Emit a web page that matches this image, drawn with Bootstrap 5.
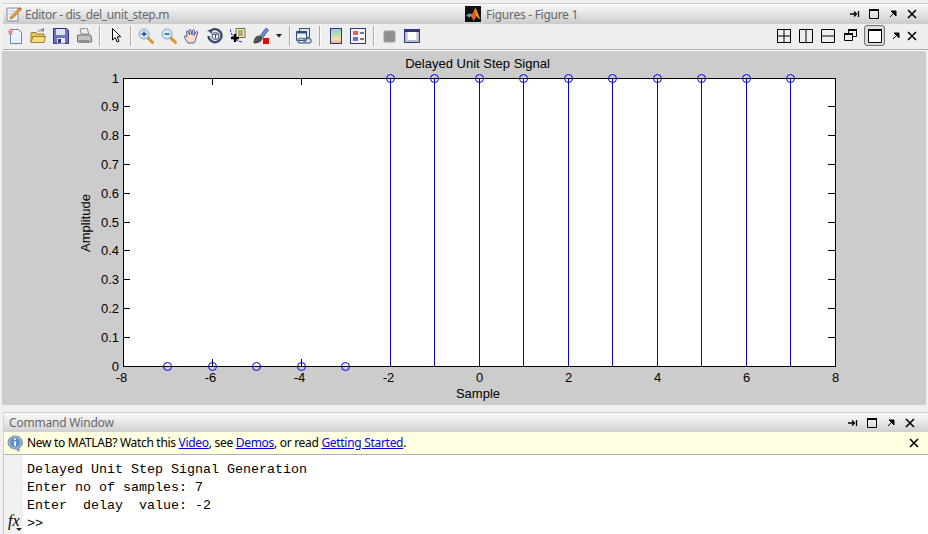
<!DOCTYPE html>
<html lang="en">

<head>
    <meta charset="UTF-8" />
    <meta name="viewport" content="width=device-width, initial-scale=1.0" />
    <title>MATLAB Figures - Figure 1</title>
    <link rel="stylesheet" href="https://cdn.jsdelivr.net/npm/bootstrap@5.3.3/dist/css/bootstrap.min.css" />
    <style>
        html, body { height: 534px; overflow: hidden; }
        body { background: #f0f0f0; font-family: "Noto Sans", "Liberation Sans", sans-serif; font-size: 12px; color: #000; }
        svg { display: block; flex: none; }
        .shell { width: 928px; height: 534px; padding-top: 3px; }
        .pane-head { height: 21px; margin-left: 3px; background: linear-gradient(#fbfbfb, #e6e6e6 45%, #cbcbcb); border-top: 1px solid #cfcfcf; color: #686868; line-height: 19px; }
        .pane-tab { width: 461px; padding-left: 2px; gap: 2px; letter-spacing: -.36px; }
        .pane-tab-fig { padding-left: 1px; gap: 5px; letter-spacing: -.28px; }
        .win-btns { gap: 10px; padding-right: 11px; }
        .win-dock { margin-right: -2px; }
        .cmd-head .win-btns { padding-right: 13px; }
        .tools { height: 26px; margin-left: 3px; padding: 0 0 2px 4px; background: #eeeeee; border-bottom: 1px solid #a9a9a9; box-shadow: 0 1px 0 #fff; gap: 7px; }
        .tool-sep { width: 1px; height: 20px; background: #a8a8a8; box-shadow: 1px 0 0 #fff; }
        .tool-arrow { width: 6px; }
        .nudge { margin-left: -1px; }
        .layout-btns { gap: 9px; padding-right: 11px; }
        .layout-tight { margin-right: -1px; }
        .layout-on { width: 21px; height: 21px; margin: 0 -2px; border: 1px solid #777; border-radius: 3px; background: #e2e2e2; box-shadow: inset 0 0 2px #aaa; }
        .layout-close { margin-left: -2px; }
        .figure-pane { margin: 1px 2px 0 2px; height: 354px; background: #cccccc; }
        .figure-pane text { font-family: "Liberation Sans", Arial, sans-serif; font-size: 13px; fill: #000; }
        .cmd-pane { margin-top: 7px; margin-left: 3px; }
        .cmd-head { height: 20px; background: linear-gradient(#fbfbfb, #e8e8e8 45%, #d0d0d0); border-top: 1px solid #cfcfcf; border-left: 1px solid #d0d0d0; color: #686868; padding-left: 5px; line-height: 19px; letter-spacing: -.2px; }
        .cmd-hint { height: 23px; background: #ffffe1; border-bottom: 1px solid #b0b0b0; border-left: 1px solid #d0d0d0; padding-left: 3px; gap: 4px; line-height: 22px; letter-spacing: -.3px; }
        .cmd-hint a { color: #0000ee; }
        .cmd-hint-close { margin-left: auto; margin-right: 9px; }
        .cmd-body { height: 79px; background: #fff; }
        .cmd-gutter { width: 20px; background: #f0f0f0; border-left: 1px solid #c8c8c8; font-family: "Liberation Serif", serif; font-style: italic; font-size: 16px; line-height: 14px; padding: 0 0 3px 4px; }
        .cmd-text { margin: 0; padding: 6px 0 0 4px; font-family: "Liberation Mono", "Courier New", monospace; font-size: 13.33px; line-height: 18px; color: #000; }
    </style>
</head>

<body>
    <div class="shell d-flex flex-column">
        <div class="pane-head d-flex">
            <div class="pane-tab d-flex align-items-center">
                <svg width="18" height="18" viewBox="0 0 18 18">
                    <path d="M2 3h11v13H2z" fill="#eef2f6" stroke="#7f8fa3" />
                    <path d="M4 6h6M4 9h5M4 12h4" stroke="#b8c4d2" />
                    <path d="M6 12l8-9 2 2-8 8-3 1z" fill="#e9a23a" stroke="#a8641a" stroke-width=".7" />
                    <path d="M14 3l1-1 2 2-1 1z" fill="#d84a3a" />
                </svg>
                <span>Editor - dis_del_unit_step.m</span>
            </div>
            <div class="pane-tab-fig d-flex align-items-center flex-grow-1">
                <svg width="16" height="16" viewBox="0 0 16 16">
                    <rect width="16" height="16" fill="#111" />
                    <path d="M1 9.500l4-2 2 1L10 2c2 1 3 8 5.500 11-2-.5-3-2-4-3-1 2-2 3.500-3 5-1-2-1.500-4-3-5z" fill="#d9601a" />
                    <path d="M10 2c2 1 3 8 5.500 11-2-.5-3-2-4-3-.5-3-1-5-1.500-8z" fill="#f5a623" />
                    <path d="M1 9.500l4-2 2 1-2.500 3z" fill="#4fa3c7" />
                </svg>
                <span>Figures - Figure 1</span>
                <div class="win-btns d-flex align-items-center ms-auto">
                    <svg class="win-dock" width="12" height="12" viewBox="0 0 12 12"><path d="M1 6h6M5 3.500L7.500 6 5 8.500M9.500 3v6" stroke="#000" fill="none" stroke-width="1.300" /></svg>
                    <svg width="10" height="10" viewBox="0 0 10 10"><path d="M.5 .5h9v9h-9z" fill="none" stroke="#000" /><path d="M0 1h10" stroke="#000" stroke-width="2" /></svg>
                    <svg width="8" height="8" viewBox="0 0 8 8"><path d="M1 7l4-4M2 1h5v5z" stroke="#000" fill="#000" /></svg>
                    <svg width="10" height="10" viewBox="0 0 10 10"><path d="M1 1l8 8M9 1L1 9" stroke="#000" stroke-width="1.600" /></svg>
                </div>
            </div>
        </div>

        <div class="tools d-flex align-items-center">
            <!-- new -->
            <svg width="16" height="16" viewBox="0 0 16 16"><path d="M3.500 1.500h8l3 3v11h-11z" fill="#eaf4fd" stroke="#5f87ad" /><path d="M3 0l1.500 3L7 2 5 4.500 6 7 3.500 5.500 1 7l1-2.500L0 2l2.500 1z" fill="#e8866a" /></svg>
            <!-- open -->
            <svg width="16" height="16" viewBox="0 0 16 16"><path d="M1 5V14.500H14V6H7L6 4.500H2z" fill="#e8c45a" stroke="#a0822a" /><path d="M1 14.500L3 8.500H15.500L14 14.500z" fill="#f7dc7e" stroke="#a0822a" /><path d="M8 4c1-2 3-3 5-2.500M13.500 0v3h-3" stroke="#5f7f9f" fill="none" /></svg>
            <!-- save -->
            <svg width="16" height="16" viewBox="0 0 16 16"><path d="M.5 .5h13l2 2v13H.5z" fill="#6b74c4" stroke="#2c3580" /><path d="M3 1h9v6H3z" fill="#dfe3f5" /><path d="M4 10h8v5.500H4z" fill="#e8e8e8" /><path d="M5 11h3v4H5z" fill="#2c3580" /></svg>
            <!-- print -->
            <svg width="16" height="16" viewBox="0 0 16 16"><path d="M4 1l7-1 2 6H5z" fill="#eee" stroke="#8a8a8a" /><path d="M1.500 7h13l1 3v4h-14z" fill="#c2c2c2" stroke="#6e6e6e" /><path d="M3 12h10v3H3z" fill="#8c8c8c" /></svg>
            <div class="tool-sep"></div>
            <!-- pointer -->
            <svg width="16" height="16" viewBox="0 0 16 16"><path d="M5.500 .5v11.500l2.800-2.500 1.700 4.500 2-.8-1.800-4.400h3.500z" fill="#fff" stroke="#000" /></svg>
            <div class="tool-sep"></div>
            <!-- zoom in -->
            <svg width="16" height="16" viewBox="0 0 16 16"><path d="M9.500 9.500l5 5" stroke="#d9952e" stroke-width="3" stroke-linecap="round" /><circle cx="6" cy="6" r="5" fill="#d5e9f7" stroke="#7fa4c4" /><path d="M3.500 6h5M6 3.500v5" stroke="#1c3f94" stroke-width="1.300" /></svg>
            <!-- zoom out -->
            <svg width="16" height="16" viewBox="0 0 16 16"><path d="M9.500 9.500l5 5" stroke="#d9952e" stroke-width="3" stroke-linecap="round" /><circle cx="6" cy="6" r="5" fill="#d5e9f7" stroke="#7fa4c4" /><path d="M3.500 6h5" stroke="#1c3f94" stroke-width="1.300" /></svg>
            <!-- pan -->
            <svg width="16" height="16" viewBox="0 0 16 16"><path d="M4 15c-1-2-3-4-3.500-6s1.500-1 2.500 0L2.500 4c0-1.500 1.500-1.500 2 0L5.500 7 5 2.500c0-1.500 2-1.500 2 0L8 7l.5-4.500c.5-1.500 2-1 2 .5L10 7.500 12 4c1-1 2-.5 1.500 1L12 10c-.5 2-1 4-2 5z" fill="#fbdcc4" stroke="#3c4fa0" stroke-width=".9" /></svg>
            <!-- rotate -->
            <svg width="16" height="16" viewBox="0 0 16 16"><path d="M3 3.500A6.500 6.500 0 1 1 1.500 8" fill="none" stroke="#3e4a70" stroke-width="2.400" /><path d="M0 2h5v4z" fill="#3e4a70" /><circle cx="8.500" cy="8" r="3.500" fill="#e8eef5" stroke="#3e4a70" /><path d="M6.500 6.500h4M8.500 6.500v4" stroke="#3e4a70" /></svg>
            <!-- data cursor -->
            <svg width="16" height="16" viewBox="0 0 16 16"><path d="M0 1c1 6 5 12 12 13" fill="none" stroke="#2222e0" stroke-dasharray="3 1" /><path d="M6 .5h9v9H6z" fill="#f5eeae" stroke="#6b6b40" /><path d="M8 3h5M8 5h5M8 7h5" stroke="#6b6b40" /><path d="M1 10h8M5 6v8" stroke="#000" stroke-width="2.400" /></svg>
            <!-- brush -->
            <svg width="16" height="16" viewBox="0 0 16 16"><path d="M7 8l6-8 2.500 2-6 8z" fill="#6a8fd0" stroke="#2c3580" stroke-width=".7" /><path d="M1 15c0-4 2-7 5-7l3 2c0 3-3 5-8 5z" fill="#555" stroke="#222" stroke-width=".7" /><rect x="10" y="10" width="6" height="6" fill="#f00000" /></svg>
            <svg width="6" height="4" viewBox="0 0 6 4" class="tool-arrow"><path d="M0 0h6L3 3.500z" fill="#222" /></svg>
            <div class="tool-sep"></div>
            <!-- link plot -->
            <svg width="16" height="16" viewBox="0 0 16 16" class="nudge"><path d="M3.500 .5h10v9h-10z" fill="#dfe8f2" stroke="#2f4f86" /><path d="M.5 3.500h10v9H.5z" fill="#eef3f8" stroke="#2f4f86" /><path d="M.5 3.500h10v2H.5z" fill="#2f4f86" /><rect x="2" y="10.500" width="7" height="4.500" rx="2.200" fill="none" stroke="#66788f" stroke-width="1.500" /><rect x="8" y="10.500" width="7" height="4.500" rx="2.200" fill="none" stroke="#66788f" stroke-width="1.500" /></svg>
            <div class="tool-sep"></div>
            <!-- colorbar -->
            <svg width="16" height="16" viewBox="0 0 16 16"><defs><linearGradient id="cbar" x1="0" y1="0" x2="0" y2="1"><stop offset="0" stop-color="#9cc4ea" /><stop offset=".4" stop-color="#b6e0b0" /><stop offset=".7" stop-color="#f2e2a6" /><stop offset="1" stop-color="#f0a8a8" /></linearGradient></defs><rect x="3.500" y=".5" width="11" height="15" fill="url(#cbar)" stroke="#2c3a78" /></svg>
            <!-- legend -->
            <svg width="16" height="16" viewBox="0 0 16 16"><rect x=".5" y=".5" width="15" height="15" fill="#f6f6f6" stroke="#2c3a78" /><rect x="3" y="3" width="5" height="4" fill="#e2606a" /><rect x="3" y="9" width="5" height="4" fill="#6a6ae2" /><path d="M10 5h4M10 11h4" stroke="#000" /></svg>
            <div class="tool-sep"></div>
            <!-- hide plot tools -->
            <svg width="16" height="16" viewBox="0 0 16 16"><rect x="3" y="3" width="11" height="11" rx="1" fill="#8f8f8f" stroke="#a2a2a2" /></svg>
            <!-- show plot tools -->
            <svg width="16" height="16" viewBox="0 0 16 16"><rect x=".5" y="1.500" width="15" height="13" fill="#fff" stroke="#2c3a78" /><path d="M1 2h14v2H1z" fill="#2c3a78" /><path d="M1 4h2.500v10H1zM12.500 4H15v10h-2.500zM3.500 12h9v2h-9z" fill="#b5bdcc" /></svg>

            <div class="layout-btns d-flex align-items-center ms-auto">
                <svg class="layout-tight" width="14" height="14" viewBox="0 0 14 14"><path d="M.5 .5h13v13H.5zM.5 7h13M7 .5v13" fill="none" stroke="#000" /></svg>
                <svg class="layout-tight" width="14" height="14" viewBox="0 0 14 14"><path d="M.5 .5h13v13H.5zM7 .5v13" fill="none" stroke="#000" /></svg>
                <svg width="14" height="14" viewBox="0 0 14 14"><path d="M.5 .5h13v13H.5zM.5 7h13" fill="none" stroke="#000" /></svg>
                <svg width="13" height="13" viewBox="0 0 13 13"><path d="M4.500 .5h8v7h-8z" fill="none" stroke="#000" /><path d="M4 1h9" stroke="#000" stroke-width="2" /><path d="M.5 4.500h8v7h-8z" fill="#eee" stroke="#000" /><path d="M0 5h9" stroke="#000" stroke-width="2" /></svg>
                <div class="layout-on d-flex align-items-center justify-content-center">
                    <svg width="14" height="14" viewBox="0 0 14 14"><path d="M.5 .5h13v13H.5z" fill="#fff" stroke="#000" /><path d="M0 1h14" stroke="#000" stroke-width="2" /></svg>
                </div>
                <svg width="8" height="8" viewBox="0 0 8 8"><path d="M1 7l4-4M2 1h5v5z" stroke="#000" fill="#000" /></svg>
                <svg class="layout-close" width="10" height="10" viewBox="0 0 10 10"><path d="M1 1l8 8M9 1L1 9" stroke="#000" stroke-width="1.600" /></svg>
            </div>
        </div>

        <div class="figure-pane">
            <svg id="plot" width="924" height="354" viewBox="2 51 924 354" shape-rendering="crispEdges"></svg>
        </div>

        <div class="cmd-pane">
            <div class="cmd-head d-flex align-items-center">
                <span>Command Window</span>
                <div class="win-btns d-flex align-items-center ms-auto">
                    <svg class="win-dock" width="12" height="12" viewBox="0 0 12 12"><path d="M1 6h6M5 3.500L7.500 6 5 8.500M9.500 3v6" stroke="#000" fill="none" stroke-width="1.300" /></svg>
                    <svg width="10" height="10" viewBox="0 0 10 10"><path d="M.5 .5h9v9h-9z" fill="none" stroke="#000" /><path d="M0 1h10" stroke="#000" stroke-width="2" /></svg>
                    <svg width="8" height="8" viewBox="0 0 8 8"><path d="M1 7l4-4M2 1h5v5z" stroke="#000" fill="#000" /></svg>
                    <svg width="10" height="10" viewBox="0 0 10 10"><path d="M1 1l8 8M9 1L1 9" stroke="#000" stroke-width="1.600" /></svg>
                </div>
            </div>
            <div class="cmd-hint d-flex align-items-center">
                <svg width="16" height="17" viewBox="0 0 16 17"><path d="M8 1a7 6.500 0 1 0 0 13h1l3 2.500V13a7 6.500 0 0 0-4-12z" fill="#8fb3d6" stroke="#7d8ea3" /><circle cx="8" cy="7.500" r="4.800" fill="#5f8fc4" /><path d="M8 3.500v1.500M8 6.500v4.500" stroke="#fff" stroke-width="2" /></svg>
                <span>New to MATLAB? Watch this <a href="#">Video</a>, see <a href="#">Demos</a>, or read <a href="#">Getting Started</a>.</span>
                <svg class="cmd-hint-close" width="10" height="10" viewBox="0 0 10 10"><path d="M1 1l8 8M9 1L1 9" stroke="#000" stroke-width="1.600" /></svg>
            </div>
            <div class="cmd-body d-flex">
                <div class="cmd-gutter d-flex flex-column justify-content-end">
                    <span>fx</span>
                    <svg class="ms-2" width="6" height="3" viewBox="0 0 6 3"><path d="M0 0h6L3 3z" fill="#222" /></svg>
                </div>
                <pre class="cmd-text">Delayed Unit Step Signal Generation
Enter no of samples: 7
Enter  delay  value: -2
&gt;&gt;</pre>
            </div>
        </div>
    </div>

    <script>
        const plot = document.getElementById('plot');
        const left = 123, right = 835, top_ = 78, bottom = 366;
        const xAt = v => Math.floor(left + (v + 8) * 44.5) + 0.5;
        const yAt = v => Math.floor(bottom - v * 288) + 0.5;
        let out = `<rect x="${left}" y="${top_}" width="${right - left}" height="${bottom - top_}" fill="#fff"/>`;

        // stems first, the axes sit on top
        for (let n = -7; n <= 7; n++) {
            const v = n >= -2 ? 1 : 0;
            if (v) out += `<path d="M${xAt(n)} ${bottom}V${top_}" stroke="#00f"/>`;
        }

        let axes = `<path d="M${left + .5} ${top_ + .5}H${right + .5}V${bottom + .5}H${left + .5}Z" fill="none" stroke="#000"/>`;
        for (let x = -8; x <= 8; x += 2) {
            // stems stay blue where a tick would run under them
            const onStem = x >= -2 && x <= 7;
            if (!onStem) axes += `<path d="M${xAt(x)} ${bottom}v-7M${xAt(x)} ${top_}v7" stroke="#000"/>`;
            out += `<text x="${xAt(x) - (x < 0 ? 2 : 0)}" y="382" text-anchor="middle">${x}</text>`;
        }
        for (let i = 0; i <= 10; i++) {
            const v = i / 10;
            axes += `<path d="M${left} ${yAt(v)}h7M${right} ${yAt(v)}h-7" stroke="#000"/>`;
            out += `<text x="119" y="${Math.floor(yAt(v)) + 5}" text-anchor="end">${v}</text>`;
        }
        out += axes;

        // circles after the axes
        for (let n = -7; n <= 7; n++) {
            const v = n >= -2 ? 1 : 0;
            out += `<circle cx="${xAt(n)}" cy="${v ? top_ + .5 : bottom + .5}" r="4" fill="none" stroke="#00f" shape-rendering="auto"/>`;
        }

        out += `<text x="477.500" y="68" text-anchor="middle">Delayed Unit Step Signal</text>`;
        out += `<text x="478" y="398" text-anchor="middle">Sample</text>`;
        out += `<text transform="translate(90 223) rotate(-90)" text-anchor="middle">Amplitude</text>`;
        plot.innerHTML = out;
    </script>
    <script src="https://cdn.jsdelivr.net/npm/bootstrap@5.3.3/dist/js/bootstrap.bundle.min.js"></script>
</body>

</html>
